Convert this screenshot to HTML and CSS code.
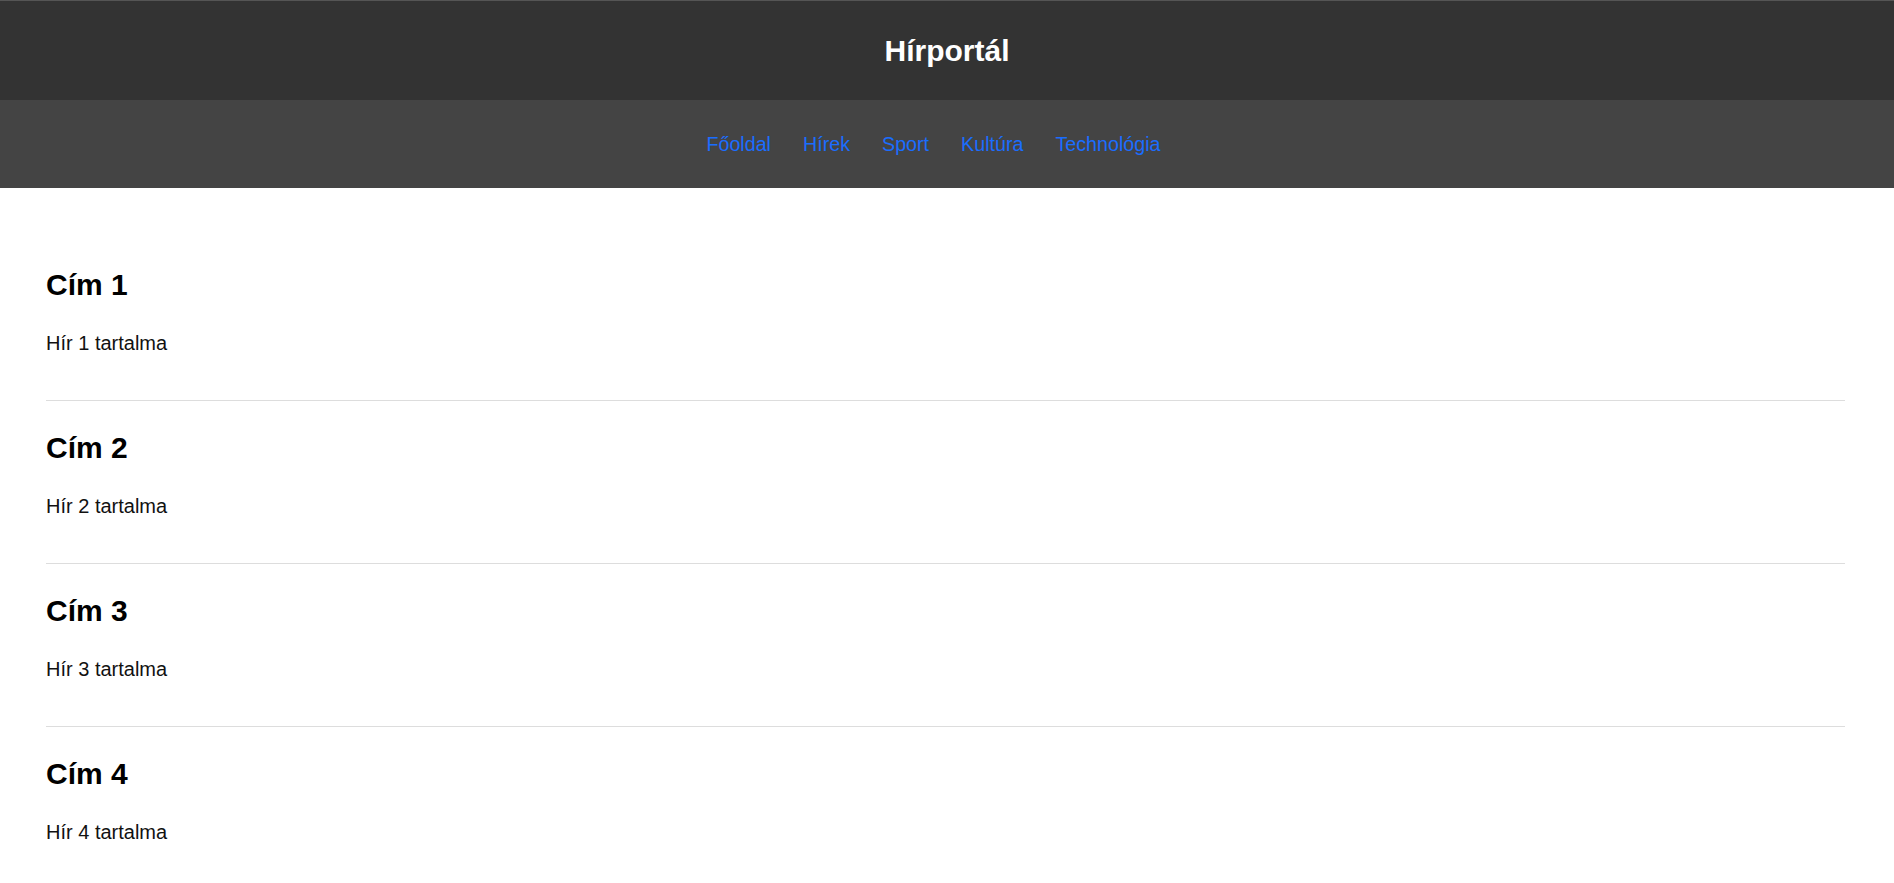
FILE: index.html
```html
<!DOCTYPE html>
<html lang="hu">
<head>
<meta charset="utf-8">
<title>Hírportál</title>
<link rel="stylesheet" href="styles.css">
</head>
<body>
<header class="site-header">
  <h1 class="site-title">Hírportál</h1>
</header>
<nav class="site-nav">
  <ul class="nav-list">
    <li class="nav-item"><a class="nav-link" href="#">Főoldal</a></li>
    <li class="nav-item"><a class="nav-link" href="#">Hírek</a></li>
    <li class="nav-item"><a class="nav-link" href="#">Sport</a></li>
    <li class="nav-item"><a class="nav-link" href="#">Kultúra</a></li>
    <li class="nav-item"><a class="nav-link" href="#">Technológia</a></li>
  </ul>
</nav>
<main class="news">
  <article class="news-item">
    <h2 class="news-title">Cím 1</h2>
    <p class="news-text">Hír 1 tartalma</p>
  </article>
  <article class="news-item">
    <h2 class="news-title">Cím 2</h2>
    <p class="news-text">Hír 2 tartalma</p>
  </article>
  <article class="news-item">
    <h2 class="news-title">Cím 3</h2>
    <p class="news-text">Hír 3 tartalma</p>
  </article>
  <article class="news-item">
    <h2 class="news-title">Cím 4</h2>
    <p class="news-text">Hír 4 tartalma</p>
  </article>
</main>
</body>
</html>
```

FILE: styles.css
```css
html, body {
  margin: 0;
  padding: 0;
  background: #ffffff;
  font-family: "Liberation Sans", Arial, sans-serif;
}

.site-header {
  background: #333333;
  border-top: 1px solid #555555;
  height: 99px;
  display: flex;
  align-items: center;
  justify-content: center;
}

.site-title {
  margin: 0;
  color: #ffffff;
  font-size: 30px;
  font-weight: bold;
  line-height: 34px;
}

.site-nav {
  background: #444444;
  height: 88px;
  display: flex;
  align-items: center;
  justify-content: center;
}

.nav-list {
  list-style: none;
  margin: 0;
  padding: 0 0 0 5px;
  display: flex;
}

.nav-item {
  margin-right: 32px;
}

.nav-link {
  color: #1a6dff;
  text-decoration: none;
  font-size: 19.7px;
  line-height: 23px;
}

.news {
  padding: 50px 49px 0 46px;
}

.news-item {
  padding: 30px 0 45px;
  border-bottom: 1px solid #dddddd;
}

.news-title {
  margin: 0 0 30px;
  font-size: 30px;
  line-height: 34px;
  font-weight: bold;
  color: #000000;
}

.news-text {
  margin: 0;
  font-size: 20px;
  line-height: 23px;
  color: #111111;
}
```
